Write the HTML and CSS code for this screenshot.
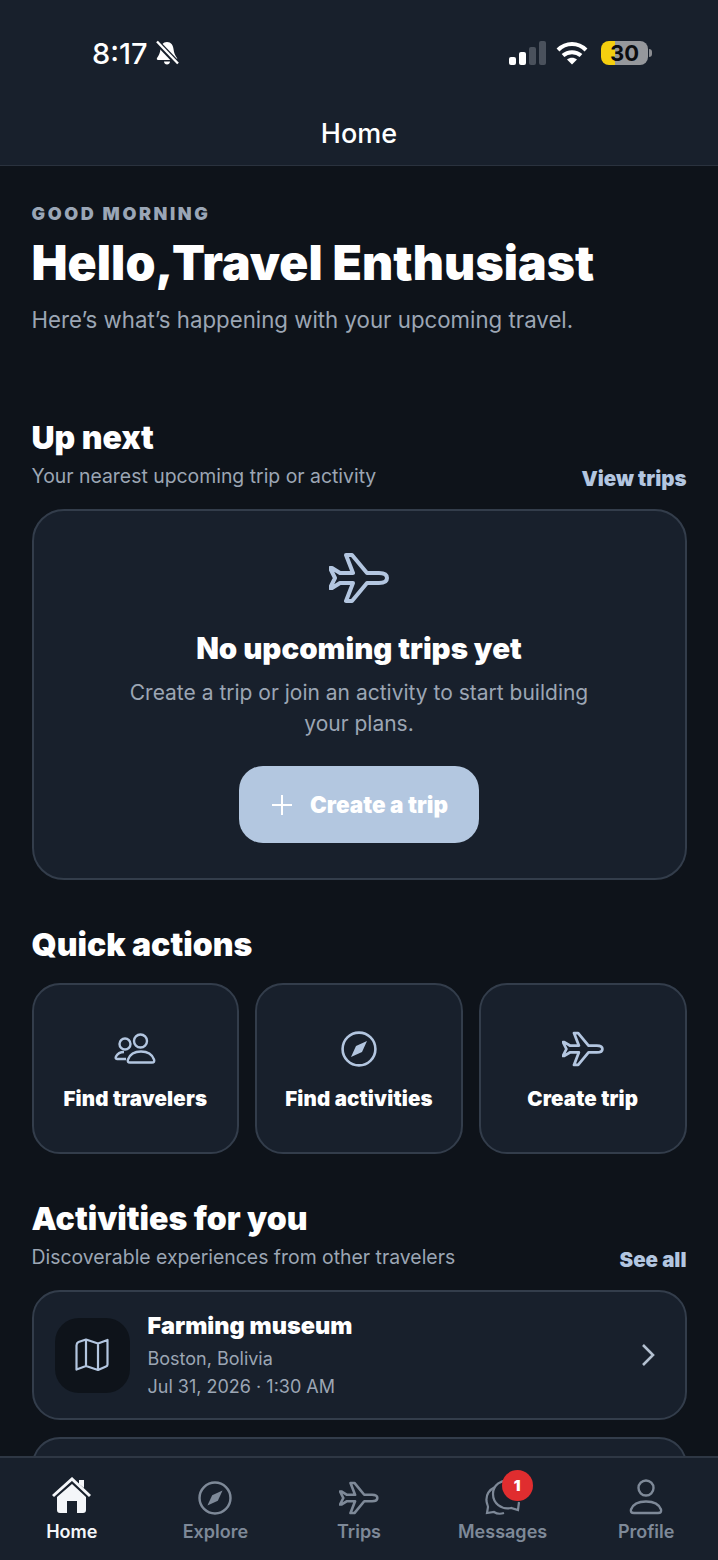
FILE: index.html
```html
<!DOCTYPE html>
<html lang="en">
<head>
    <meta charset="UTF-8">
    <meta name="viewport" content="width=device-width, initial-scale=1.0">
    <title>Home</title>
    <link rel="stylesheet" href="styles.css">
</head>
<body>
    <svg class="sprites" width="0" height="0">
        <symbol id="plane" viewBox="0 0 60 52">
            <path d="M58 26Q58 21 50 21H38L23 3H17L24 21H11L3 16H1L6 26L1 36H3L11 31H24L17 49H23L38 31H50Q58 31 58 26Z" fill="none" stroke="currentColor" stroke-width="4" stroke-linejoin="round"/>
        </symbol>
        <symbol id="compass" viewBox="0 0 36 36">
            <circle cx="18" cy="18" r="16.4" fill="none" stroke="currentColor" stroke-width="2.6"/>
            <path d="M26 10L21 21L10 26L15 15Z" fill="currentColor"/>
        </symbol>
    </svg>

    <header class="top">
        <div class="status">
            <div class="status-left">
                <span class="clock">8:17</span>
                <svg class="bell" width="24" height="26" viewBox="0 0 24 26">
                    <path d="M12 2C8 2 6 5 5.500 9C5 13 4 15 2 18C1.500 19 2 20 3 20H21C22 20 22.500 19 22 18C20 15 19 13 18.500 9C18 5 16 2 12 2Z" fill="#fff"/>
                    <path d="M9 21.500H15C15 23.500 13.500 24.500 12 24.500C10.500 24.500 9 23.500 9 21.500Z" fill="#fff"/>
                    <path d="M1 1L23 24" stroke="#18202c" stroke-width="5.500"/>
                    <path d="M2 1.500L23 23.500" stroke="#fff" stroke-width="2.400"/>
                </svg>
            </div>
            <div class="status-right">
                <div class="signal">
                    <i class="bar on b1"></i>
                    <i class="bar on b2"></i>
                    <i class="bar b3"></i>
                    <i class="bar b4"></i>
                </div>
                <svg class="wifi" width="32" height="24" viewBox="0 0 32 24">
                    <path d="M2 9C10 1 22 1 30 9M7 14.500C12 10 20 10 25 14.500" fill="none" stroke="#fff" stroke-width="4"/>
                    <path d="M11 18.500C14 16 18 16 21 18.500L16 23.500Z" fill="#fff"/>
                </svg>
                <div class="battery">
                    <div class="battery-body"><span>30</span></div>
                    <i class="battery-cap"></i>
                </div>
            </div>
        </div>
        <div class="top-title">Home</div>
    </header>

    <main class="content">
        <section class="hello">
            <p class="eyebrow">GOOD MORNING</p>
            <h1>Hello,Travel Enthusiast</h1>
            <p class="lead">Here’s what’s happening with your upcoming travel.</p>
        </section>

        <section class="up-next">
            <div class="section-head">
                <div>
                    <h2>Up next</h2>
                    <p class="sub">Your nearest upcoming trip or activity</p>
                </div>
                <a class="link">View trips</a>
            </div>
            <div class="card empty">
                <svg class="empty-icon" width="60" height="52"><use href="#plane"/></svg>
                <h3>No upcoming trips yet</h3>
                <p>Create a trip or join an activity to start building your plans.</p>
                <button class="primary">
                    <svg width="24" height="24" viewBox="0 0 24 24"><path d="M12 2V22M2 12H22" stroke="#fff" stroke-width="2"/></svg>
                    Create a trip
                </button>
            </div>
        </section>

        <section class="quick">
            <h2>Quick actions</h2>
            <div class="quick-grid">
                <div class="card quick-item">
                    <svg width="42" height="32" viewBox="0 0 42 32">
                        <circle cx="11" cy="11" r="5.500" fill="none" stroke="currentColor" stroke-width="2.400"/>
                        <circle cx="26.500" cy="8" r="6.500" fill="none" stroke="currentColor" stroke-width="2.400"/>
                        <path d="M12 26H3Q1 26 2 23.500C3.500 20.500 6 19 10 19" fill="none" stroke="currentColor" stroke-width="2.400"/>
                        <path d="M16 29.500H38Q41 29.500 40 26.500C38 21 33 18.500 27 18.500C21 18.500 16 21 14 26.500Q13 29.500 16 29.500Z" fill="none" stroke="currentColor" stroke-width="2.400"/>
                    </svg>
                    <span>Find travelers</span>
                </div>
                <div class="card quick-item">
                    <svg width="36" height="36"><use href="#compass"/></svg>
                    <span>Find activities</span>
                </div>
                <div class="card quick-item">
                    <svg width="42" height="36"><use href="#plane"/></svg>
                    <span>Create trip</span>
                </div>
            </div>
        </section>

        <section class="activities">
            <div class="section-head">
                <div>
                    <h2>Activities for you</h2>
                    <p class="sub">Discoverable experiences from other travelers</p>
                </div>
                <a class="link">See all</a>
            </div>
            <div class="card activity">
                <div class="activity-icon">
                    <svg width="34" height="34" viewBox="0 0 34 34">
                        <path d="M1.500 7.500Q1.500 5 3.500 4L11 1.500L23 5.500L32.500 2V26.500Q32.500 28 31 28.500L23 32L11 28L1.500 31.500ZM11 1.500V28M23 5.500V32" fill="none" stroke="currentColor" stroke-width="2.200" stroke-linejoin="round"/>
                    </svg>
                </div>
                <div class="activity-text">
                    <h4>Farming museum</h4>
                    <p>Boston, Bolivia</p>
                    <p>Jul 31, 2026 · 1:30 AM</p>
                </div>
                <svg class="chevron" width="16" height="24" viewBox="0 0 16 24"><path d="M3 2L13 12L3 22" fill="none" stroke="currentColor" stroke-width="2.600"/></svg>
            </div>
            <div class="card activity"></div>
        </section>
    </main>

    <nav class="tabs">
        <a class="tab active">
            <svg width="40" height="38" viewBox="0 0 40 38">
                <path d="M1 19L20 2L38 19" fill="none" stroke="currentColor" stroke-width="3"/>
                <path d="M27 3H32V11L27 7Z" fill="currentColor"/>
                <path d="M5 20L20 7L34 20V33Q34 36 31 36H25V24H15V36H8Q5 36 5 33Z" fill="currentColor"/>
            </svg>
            <span>Home</span>
        </a>
        <a class="tab">
            <svg width="34" height="34"><use href="#compass"/></svg>
            <span>Explore</span>
        </a>
        <a class="tab">
            <svg width="40" height="34"><use href="#plane"/></svg>
            <span>Trips</span>
        </a>
        <a class="tab">
            <span class="msg-icon">
                <svg width="36" height="36" viewBox="0 0 36 36">
                    <path d="M10 8C4 11 1 16 1.500 22C2 25 3 27 3 28L2 34L9 33C12 35 16 35 19 34" fill="none" stroke="currentColor" stroke-width="2.200"/>
                    <path d="M26 2C16 0 8 6 8 15C8 24 16 31 26 29L33 31L34 23" fill="none" stroke="currentColor" stroke-width="2.200"/>
                </svg>
                <b class="badge">1</b>
            </span>
            <span>Messages</span>
        </a>
        <a class="tab">
            <svg width="34" height="36" viewBox="0 0 34 36">
                <circle cx="17" cy="9" r="7.500" fill="none" stroke="currentColor" stroke-width="2.400"/>
                <path d="M5 34H29Q33 34 32 30.500C30 25 24 22.500 17 22.500C10 22.500 4 25 2 30.500Q1 34 5 34Z" fill="none" stroke="currentColor" stroke-width="2.400"/>
            </svg>
            <span>Profile</span>
        </a>
    </nav>
</body>
</html>
```

FILE: styles.css
```css
* {
    box-sizing: border-box;
}
html,
body {
    margin: 0;
    height: 1560px;
    overflow: hidden;
}
body {
    display: flex;
    flex-direction: column;
    font-family: "Inter", "Liberation Sans", sans-serif;
    color: #fff;
    background-color: #0e131a;
}
h1,
h2,
h3,
h4,
p {
    margin: 0;
}
.sprites {
    position: absolute;
}

/* top bar */
.top {
    flex: none;
    height: 166px;
    background-color: #18202c;
    border-bottom: 1px solid #2a323e;
}
.status {
    display: flex;
    justify-content: space-between;
    align-items: center;
    height: 106px;
    padding: 0 66px 0 92px;
}
.status-left,
.status-right {
    display: flex;
    align-items: center;
}
.clock {
    font-size: 29px;
    font-weight: 500;
}
.bell {
    margin-left: 7px;
}
.signal {
    display: flex;
    align-items: flex-end;
    gap: 3px;
    height: 24px;
}
.bar {
    width: 7px;
    border-radius: 2px;
    background-color: #4a515c;
}
.bar.on {
    background-color: #fff;
}
.b1 { height: 8px; }
.b2 { height: 13px; }
.b3 { height: 18px; }
.b4 { height: 24px; }
.wifi {
    margin: 0 13px 0 10px;
}
.battery {
    display: flex;
    align-items: center;
}
.battery-body {
    width: 47px;
    height: 24px;
    border-radius: 8px;
    background: linear-gradient(90deg, #f5cf0f 30%, #96989c 30%);
    color: #0b0d10;
    font-size: 22px;
    font-weight: 700;
    line-height: 24px;
    text-align: center;
}
.battery-cap {
    width: 3px;
    height: 8px;
    margin-left: 1px;
    border-radius: 0 3px 3px 0;
    background-color: #8b8d92;
}
.top-title {
    text-align: center;
    font-size: 27px;
    font-weight: 500;
    line-height: 56px;
}

/* page content */
.content {
    flex: 1;
    min-height: 0;
    overflow: hidden;
    padding: 36px 31.500px 0;
}
.eyebrow {
    font-size: 18px;
    font-weight: 900;
    letter-spacing: 2.600px;
    line-height: 24px;
    color: #9aa6b6;
}
h1 {
    margin-top: 9px;
    font-size: 48px;
    font-weight: 900;
    letter-spacing: 0.100px;
    line-height: 56px;
}
.lead {
    margin-top: 13px;
    font-size: 22.250px;
    line-height: 32px;
    color: #9ca6b4;
}
.up-next {
    margin-top: 81px;
}
h2 {
    font-size: 32px;
    font-weight: 900;
    line-height: 42px;
}
.sub {
    font-size: 19.400px;
    line-height: 28px;
    margin-top: 3px;
    color: #9ca6b4;
}
.section-head {
    display: flex;
    justify-content: space-between;
    align-items: flex-end;
}
.link {
    font-size: 20.500px;
    font-weight: 900;
    line-height: 26px;
    color: #b3c6e0;
    transform: translateY(2px);
}
.card {
    background-color: #18202c;
    border: 2px solid #333d4b;
    border-radius: 32px;
}
.empty {
    display: flex;
    flex-direction: column;
    align-items: center;
    height: 371px;
    margin-top: 19px;
    padding-top: 41px;
    color: #b3c6e0;
    text-align: center;
}
.empty h3 {
    margin-top: 24px;
    font-size: 29.500px;
    font-weight: 900;
    line-height: 40px;
    color: #fff;
}
.empty p {
    width: 480px;
    margin-top: 9px;
    font-size: 21px;
    line-height: 31px;
    color: #9ca6b4;
}
.primary {
    display: flex;
    align-items: center;
    justify-content: center;
    gap: 16px;
    width: 240px;
    height: 77px;
    margin-top: 27px;
    border: none;
    border-radius: 24px;
    background-color: #b3c7e0;
    color: #fff;
    font-family: inherit;
    font-size: 22.500px;
    font-weight: 900;
}
.quick {
    margin-top: 44px;
}
.quick-grid {
    display: grid;
    grid-template-columns: repeat(3, 1fr);
    gap: 16px;
    margin-top: 17px;
}
.quick-item {
    display: flex;
    flex-direction: column;
    align-items: center;
    height: 171px;
    padding-top: 46px;
    border-radius: 28px;
    color: #b3c6e0;
}
.quick-item svg {
    height: 36px;
}
.quick-item span {
    margin-top: 18px;
    font-size: 20.500px;
    font-weight: 900;
    letter-spacing: 0.150px;
    line-height: 28px;
    color: #fff;
}
.activities {
    margin-top: 44px;
}
.activity {
    display: flex;
    align-items: center;
    height: 130px;
    margin-top: 19px;
    padding: 0 29px 0 21px;
    border-radius: 28px;
}
.activity + .activity {
    margin-top: 17px;
}
.activity-icon {
    display: flex;
    align-items: center;
    justify-content: center;
    width: 75px;
    height: 75px;
    border-radius: 24px;
    background-color: #0e131a;
    color: #b3c6e0;
}
.activity-text {
    flex: 1;
    margin-left: 18px;
}
.activity-text h4 {
    font-size: 23.500px;
    font-weight: 900;
    line-height: 32px;
    margin-bottom: 3px;
}
.activity-text p {
    font-size: 18px;
    line-height: 28px;
    color: #9ca6b4;
}
.chevron {
    color: #b3c0d0;
}

/* bottom tabs */
.tabs {
    flex: none;
    display: grid;
    grid-template-columns: repeat(5, 1fr);
    height: 104px;
    background-color: #18202c;
    border-top: 2px solid #2e3744;
}
.tab {
    display: flex;
    flex-direction: column;
    align-items: center;
    justify-content: flex-end;
    height: 85px;
    color: #7e8998;
    font-size: 18px;
    font-weight: 600;
    line-height: 22px;
}
.tab.active {
    color: #f4f6f9;
}
.tab svg {
    display: block;
    margin-bottom: 6px;
}
.msg-icon {
    position: relative;
    display: block;
}
.badge {
    position: absolute;
    top: -9px;
    right: -12px;
    width: 31px;
    height: 31px;
    border-radius: 50%;
    background-color: #e02d2f;
    color: #fff;
    font-size: 15px;
    line-height: 31px;
    text-align: center;
}
```
